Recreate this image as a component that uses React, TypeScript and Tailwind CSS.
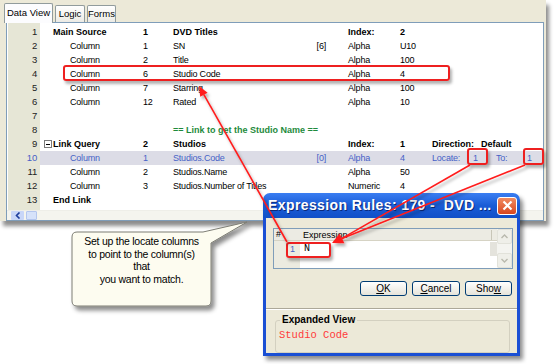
import React from 'react';

type Row = {
  label?: string;
  level?: 0 | 1;
  num?: string;
  name?: string;
  br?: string;
  type?: string;
  val?: string;
  bold?: boolean;
  blue?: boolean;
  green?: string;
  tree?: boolean;
  tail?: 'dir' | 'locate';
};

const rows: Row[] = [
  { label: 'Main Source', level: 0, num: '1', name: 'DVD Titles', type: 'Index:', val: '2', bold: true },
  { label: 'Column', level: 1, num: '1', name: 'SN', br: '[6]', type: 'Alpha', val: 'U10' },
  { label: 'Column', level: 1, num: '2', name: 'Title', type: 'Alpha', val: '100' },
  { label: 'Column', level: 1, num: '6', name: 'Studio Code', type: 'Alpha', val: '4' },
  { label: 'Column', level: 1, num: '7', name: 'Starring', type: 'Alpha', val: '100' },
  { label: 'Column', level: 1, num: '12', name: 'Rated', type: 'Alpha', val: '10' },
  {},
  { green: '== Link to get the Studio Name ==' },
  { label: 'Link Query', level: 0, tree: true, num: '2', name: 'Studios', type: 'Index:', val: '1', bold: true, tail: 'dir' },
  { label: 'Column', level: 1, num: '1', name: 'Studios.Code', br: '[0]', type: 'Alpha', val: '4', blue: true, tail: 'locate' },
  { label: 'Column', level: 1, num: '2', name: 'Studios.Name', type: 'Alpha', val: '50' },
  { label: 'Column', level: 1, num: '3', name: 'Studios.Number of Titles', type: 'Numeric', val: '4' },
  { label: 'End Link', level: 0, bold: true },
];

function GridRow({ r }: { r: Row }) {
  const color = r.blue ? 'text-[#4661c6]' : 'text-black';
  const weight = r.bold ? 'font-bold tracking-normal' : 'font-normal';
  return (
    <div
      className={`flex h-[14px] items-center whitespace-nowrap text-[9px] leading-[14px] ${color} ${
        r.blue ? 'bg-[#dcdce6]' : ''
      }`}
    >
      <div className={`w-[103px] flex items-center ${r.level === 0 ? (r.tree ? 'pl-[4px]' : 'pl-[13px]') : 'pl-[30px]'}`}>
        {r.tree && (
          <span className="w-[8px] h-[8px] border border-[#7a7a7a] bg-white flex items-center justify-center mr-[1px]">
            <span className="w-[4px] h-[1px] bg-black" />
          </span>
        )}
        <span className={weight}>{r.label}</span>
      </div>
      <div className={`w-[30px] ${weight}`}>{r.num}</div>
      {r.green ? (
        <div className="font-bold tracking-normal text-[#1e8a3c]">{r.green}</div>
      ) : (
        <>
          <div className="w-[153px] flex justify-between">
            <span className={weight}>{r.name}</span>
            <span>{r.br}</span>
          </div>
          <div className="w-[22px]" />
          <div className={`w-[52px] ${weight}`}>{r.type}</div>
          <div className={`w-[32px] ${weight}`}>{r.val}</div>
          {r.tail === 'dir' && (
            <>
              <div className="w-[49px] font-bold tracking-normal">Direction:</div>
              <div className="font-bold tracking-normal">Default</div>
            </>
          )}
          {r.tail === 'locate' && (
            <>
              <div className="w-[41px]">Locate:</div>
              <div className="w-[23px]">1</div>
              <div className="w-[31px]">To:</div>
              <div>1</div>
            </>
          )}
        </>
      )}
    </div>
  );
}

function MainWindow() {
  return (
    <div className="w-[546px] h-[221px] bg-[#ece9d8] flex flex-col shadow-[3px_5px_4px_rgba(0,0,0,0.45)]">
      <div className="h-[22px] flex items-end pl-[4px] gap-[2px] text-[9.5px]">
        <div className="w-[49px] h-[20px] -mb-[1px] bg-[#fcfcfe] border-t border-x border-[#919b9c] rounded-t-[2px] flex items-center justify-center z-10">
          Data View
        </div>
        <div className="w-[30px] h-[17px] bg-linear-to-b from-white to-[#ecebe5] border-t border-x border-[#919b9c] rounded-t-[2px] flex items-center justify-center">
          Logic
        </div>
        <div className="w-[29px] h-[17px] bg-linear-to-b from-white to-[#ecebe5] border-t border-x border-[#919b9c] rounded-t-[2px] flex items-center justify-center">
          Forms
        </div>
      </div>
      <div className="ml-[6px] mr-[2px] flex-1 border border-[#7f9db9] bg-white flex flex-col tracking-[-0.2px]">
        <div className="flex flex-1">
          <div className="ml-[1px] w-[32px] bg-[#e6e6d6] pt-[2px] flex flex-col">
            {rows.map((r, i) => (
              <div
                key={i}
                className={`h-[14px] leading-[14px] text-right pr-[3px] text-[9.5px] ${
                  r.blue ? 'text-[#4661c6]' : 'text-[#222]'
                }`}
              >
                {i + 1}
              </div>
            ))}
          </div>
          <div className="flex-1 pt-[2px] flex flex-col">
            {rows.map((r, i) => (
              <GridRow key={i} r={r} />
            ))}
          </div>
        </div>
        <div className="h-[10px] flex items-center bg-[#f4f4ee] pl-[4px] border-t border-[#eeeee8]">
          <div className="w-[13px] h-[9px] bg-[#c8d6f8] rounded-[1px] flex items-center justify-center">
            <svg width="6" height="7" viewBox="0 0 6 7">
              <path d="M4.5 0.5 L1.5 3.5 L4.5 6.5" stroke="#1d3d9c" strokeWidth="1.6" fill="none" />
            </svg>
          </div>
          <div className="ml-[2px] w-[11px] h-[9px] bg-[#d6e2fa] border border-[#b4c6ee] rounded-[1px]" />
        </div>
      </div>
    </div>
  );
}

function Callout() {
  return (
    <>
      <svg className="absolute left-0 top-0 pointer-events-none" width="554" height="364">
        <defs>
          <filter id="cshadow" x="-20%" y="-20%" width="150%" height="150%">
            <feDropShadow dx="3" dy="4" stdDeviation="2" floodColor="#000" floodOpacity="0.45" />
          </filter>
        </defs>
        <path
          d="M77 232 L203 232 L247 222 L211 243 L211 301 Q211 306 206 306 L77 306 Q72 306 72 301 L72 237 Q72 232 77 232 Z"
          fill="#fdfcf0"
          stroke="#7d7d74"
          strokeWidth="1"
          filter="url(#cshadow)"
        />
      </svg>
      <div className="absolute left-[72px] top-[235px] w-[139px] text-center text-[10.5px] leading-[12.7px] tracking-[-0.25px] text-black">
        Set up the locate columns
        <br />
        to point to the column(s)
        <br />
        that
        <br />
        you want to match.
      </div>
    </>
  );
}

function Dialog() {
  return (
    <div className="absolute left-[263px] top-[193px] w-[257px] h-[163px] flex flex-col shadow-[3px_4px_4px_rgba(0,0,0,0.45)] rounded-t-[7px]">
      <div className="h-[25px] rounded-t-[7px] bg-linear-to-b from-[#3a7ef2] via-[#1a5cd6] to-[#1150c8] flex items-center">
        <span className="pl-[5px] text-[14px] font-bold text-white tracking-[0.4px] whitespace-pre [text-shadow:1px_1px_0_#0b2a7a]">
          Expression Rules: 179 -  DVD ...
        </span>
        <div className="ml-auto mr-[3px] w-[20px] h-[18px] rounded-[3px] border border-white bg-linear-to-b from-[#f08a60] to-[#d8451c] flex items-center justify-center">
          <svg width="11" height="11" viewBox="0 0 11 11">
            <path d="M1.5 1.5 L9.5 9.5 M9.5 1.5 L1.5 9.5" stroke="white" strokeWidth="2.2" />
          </svg>
        </div>
      </div>
      <div className="flex-1 bg-[#ece9d8] border-x-[3px] border-b-[3px] border-[#1a4fd4] flex flex-col overflow-hidden">
        <div className="ml-[7px] mt-[10px] w-[240px] h-[49px] border border-[#7f9db9] bg-white flex">
          <div className="flex-1 flex flex-col">
            <div className="h-[12px] bg-[#ecebe3] border-b border-[#d6d3c4] flex items-center text-[9px]">
              <div className="w-[27px] pl-[2px]">#</div>
              <div className="flex-1 pl-[2px] border-r border-[#c8c6b8] h-[10px] leading-[10px] mr-[5px]">Expression</div>
            </div>
            <div className="flex-1 flex">
              <div className="w-[26px] bg-[#ecebe0] pt-[1px]">
                <div className="h-[14px] leading-[14px] text-right pr-[5px] text-[9px] text-[#4661c6]">1</div>
              </div>
              <div className="flex-1 pt-[1px]">
                <div className="h-[14px] flex">
                  <div className="flex-1 bg-white leading-[14px] pl-[4px] text-[10px] [font-family:'Liberation_Mono',monospace]">
                    N
                  </div>
                  <div className="w-[7px] bg-[#e4e3dc]" />
                </div>
              </div>
            </div>
          </div>
          <div className="w-[15px] bg-[#f4f4f0] flex flex-col justify-between">
            <div className="h-[15px] bg-[#efefe9] border border-[#e2e2da] rounded-[2px] flex items-center justify-center">
              <svg width="7" height="5" viewBox="0 0 7 5">
                <path d="M0.5 4 L3.5 1 L6.5 4" stroke="#b9b9ad" strokeWidth="1.4" fill="none" />
              </svg>
            </div>
            <div className="h-[15px] bg-[#efefe9] border border-[#e2e2da] rounded-[2px] flex items-center justify-center">
              <svg width="7" height="5" viewBox="0 0 7 5">
                <path d="M0.5 1 L3.5 4 L6.5 1" stroke="#b9b9ad" strokeWidth="1.4" fill="none" />
              </svg>
            </div>
          </div>
        </div>
        <div className="mt-[12px] h-[15px] flex justify-end gap-[5px] pr-[5px] text-[10px]">
          <div className="w-[47px] border border-[#003c74] rounded-[3px] bg-linear-to-b from-white to-[#e6e4da] flex items-center justify-center">
            <span>
              <span className="underline">O</span>K
            </span>
          </div>
          <div className="w-[48px] border border-[#003c74] rounded-[3px] bg-linear-to-b from-white to-[#e6e4da] flex items-center justify-center">
            <span>
              <span className="underline">C</span>ancel
            </span>
          </div>
          <div className="w-[47px] border border-[#003c74] rounded-[3px] bg-linear-to-b from-white to-[#e6e4da] flex items-center justify-center">
            <span>
              Sho<span className="underline">w</span>
            </span>
          </div>
        </div>
        <div className="mt-[12px] border-t border-[#aca899] border-b border-b-white" />
        <div className="relative ml-[9px] mt-[10px] w-[235px] h-[40px] border border-[#d3d0c0] rounded-[3px]">
          <div className="absolute -top-[7px] left-[4px] bg-[#ece9d8] px-[2px] text-[10px] font-bold leading-[12px]">
            Expanded View
          </div>
          <div className="pl-[3px] pt-[8px] text-[10.5px] leading-[12px] text-[#ff3a3a] [font-family:'Liberation_Mono',monospace]">
            Studio Code
          </div>
        </div>
      </div>
    </div>
  );
}

function RedBoxes() {
  const cls =
    'absolute border-2 border-[#ee2020] rounded-[3px] shadow-[2px_3px_3px_rgba(0,0,0,0.3)] pointer-events-none';
  return (
    <>
      <div className={`${cls} left-[63px] top-[65px] w-[387px] h-[16px]`} />
      <div className={`${cls} left-[467px] top-[148px] w-[21px] h-[17px]`} />
      <div className={`${cls} left-[523px] top-[148px] w-[21px] h-[17px]`} />
      <div className={`${cls} left-[286px] top-[242px] w-[45px] h-[16px]`} />
    </>
  );
}

function Arrows() {
  return (
    <svg className="absolute left-0 top-0 pointer-events-none" width="554" height="364">
      <defs>
        <filter id="ashadow" x="-10%" y="-10%" width="130%" height="130%">
          <feDropShadow dx="2" dy="3" stdDeviation="1.5" floodColor="#000" floodOpacity="0.3" />
        </filter>
      </defs>
      <g filter="url(#ashadow)" stroke="#ff1c1c" strokeWidth="1.6" fill="#ff1c1c">
        <line x1="287" y1="242" x2="203.9" y2="94.7" />
        <polygon points="199,86 207.6,92.8 200.2,96.8" stroke="none" />
        <line x1="470" y1="165" x2="342" y2="238.4" />
        <line x1="525" y1="165" x2="342" y2="238.4" />
        <polygon points="332,243 344.4,243.2 339.6,233.6" stroke="none" />
      </g>
    </svg>
  );
}

export default function App() {
  return (
    <div className="relative w-[554px] h-[364px] overflow-hidden bg-white text-black [font-family:'Liberation_Sans',Arial,sans-serif]">
      <MainWindow />
      <Callout />
      <Dialog />
      <RedBoxes />
      <Arrows />
    </div>
  );
}
